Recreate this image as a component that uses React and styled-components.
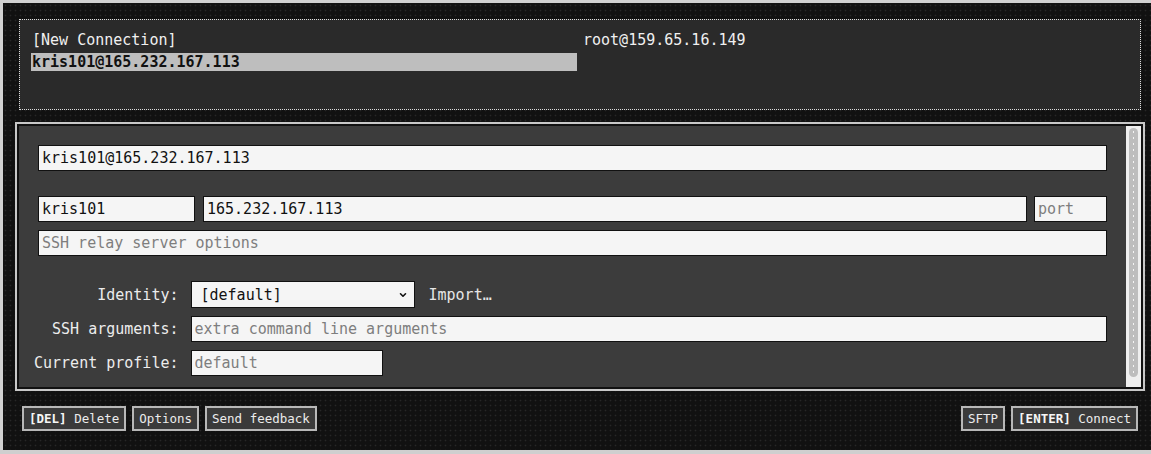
import React from 'react'
import styled, { createGlobalStyle } from 'styled-components'
import { ChevronDown } from 'lucide-react'

const mono = `"DejaVu Sans Mono", "Liberation Mono", monospace`

const GlobalStyle = createGlobalStyle`
    html, body {
        margin: 0;
        padding: 0;
        background: #111;
    }
    * {
        box-sizing: border-box;
    }
`

const Frame = styled.div`
    width: 1151px;
    height: 454px;
    border: solid #cfcfcf;
    border-width: 3px 0 4px 3px;
    background-color: #111;
    background-image: radial-gradient(circle, #272727 0.7px, transparent 1.1px);
    background-size: 5px 5px;
    padding: 16px 10px 19px 16px;
    display: flex;
    flex-direction: column;
    font-family: ${mono};
`

const HostList = styled.div`
    height: 91px;
    flex: 0 0 auto;
    border: 1px dotted #dcdcdc;
    background: #2a2a2a;
    padding: 11px 12px 0 11px;
    display: grid;
    grid-template-columns: 1fr 1fr;
    grid-auto-rows: 18px;
    column-gap: 5px;
    row-gap: 4px;
    align-content: start;
`

const HostItem = styled.div`
    height: 18px;
    line-height: 18px;
    font-size: 15px;
    padding-left: 1px;
    white-space: nowrap;
    color: ${p => (p.$selected ? '#111' : '#f0f0f0')};
    background: ${p => (p.$selected ? '#bebebe' : 'transparent')};
    font-weight: ${p => (p.$selected ? 'bold' : 'normal')};
`

const FormPanel = styled.div`
    margin: 14px -2px 0;
    height: 265px;
    flex: 0 0 auto;
    border: 2px solid #111;
    outline: 2px solid #c8c8c8;
    background: #3c3c3c;
    display: flex;
`

const FormBody = styled.div`
    flex: 1;
    padding: 19px 19px 0 19px;
    display: flex;
    flex-direction: column;
`

const Scrollbar = styled.div`
    width: 15px;
    background: #efefef;
    padding: 2px 3px 10px;
    display: flex;
    flex-direction: column;
`

const Thumb = styled.div`
    flex: 1;
    border-radius: 4.5px;
    background-color: #bdbdbd;
    background-image: radial-gradient(circle, #f4f4f4 0.6px, transparent 1px);
    background-size: 5px 6px;
    background-position: 2px 1px;
`

const Input = styled.input`
    display: block;
    height: ${p => p.$height || 26}px;
    width: ${p => (p.$width ? `${p.$width}px` : '100%')};
    flex: ${p => (p.$grow ? '1 1 0' : '0 0 auto')};
    min-width: 0;
    border: 1px solid #111;
    background: #f5f5f5;
    color: #111;
    font-family: ${mono};
    font-size: 15px;
    padding: 0 3px;
    margin: 0;
    outline: none;
    border-radius: 0;
    &::placeholder {
        color: #7e7e7e;
    }
`

const Block = styled.div`
    display: flex;
    flex-direction: column;
    gap: 8px;
    margin-bottom: 25px;
`

const HostRow = styled.div`
    display: flex;
    gap: 8px;
    & > :last-child {
        margin-left: -1px;
    }
`

const OptionGrid = styled.div`
    margin-left: -4px;
    display: grid;
    grid-template-columns: max-content 1fr;
    column-gap: 12px;
    row-gap: 8px;
    align-items: center;
`

const Label = styled.label`
    justify-self: end;
    color: #ececec;
    font-size: 15px;
    white-space: nowrap;
`

const Field = styled.div`
    display: flex;
    align-items: center;
    gap: 14px;
`

const SelectWrap = styled.div`
    position: relative;
    width: 224px;
    height: 27px;
`

const Select = styled.select`
    appearance: none;
    display: block;
    width: 100%;
    height: 100%;
    border: 1px solid #111;
    border-radius: 0;
    background: #f5f5f5;
    color: #111;
    font-family: ${mono};
    font-size: 15px;
    padding: 0 24px 0 9px;
    margin: 0;
    outline: none;
`

const Chevron = styled.span`
    position: absolute;
    right: 7px;
    top: 9px;
    display: flex;
    pointer-events: none;
    color: #111;
`

const LinkText = styled.span`
    color: #e6e6e6;
    font-size: 15px;
`

const ButtonBar = styled.div`
    margin-top: 17px;
    padding: 0 3px;
    height: 25px;
    flex: 0 0 auto;
    display: flex;
    justify-content: space-between;
`

const ButtonGroup = styled.div`
    display: flex;
    gap: ${p => p.$gap}px;
`

const Button = styled.button`
    height: 25px;
    border: 2px solid #b8b8b8;
    background: #3a3a3a;
    color: #ececec;
    font-family: ${mono};
    font-size: 12.5px;
    padding: 0 5px;
    margin: 0;
    white-space: nowrap;
    cursor: pointer;
    b {
        color: #f6f6f6;
    }
`

const App = () => {
    return (
        <>
            <GlobalStyle />
            <Frame>
                <HostList>
                    <HostItem>[New Connection]</HostItem>
                    <HostItem>root@159.65.16.149</HostItem>
                    <HostItem $selected>kris101@165.232.167.113</HostItem>
                </HostList>
                <FormPanel>
                    <FormBody>
                        <Block>
                            <Input defaultValue="kris101@165.232.167.113" />
                        </Block>
                        <Block>
                            <HostRow>
                                <Input $width={157} defaultValue="kris101" />
                                <Input $grow defaultValue="165.232.167.113" />
                                <Input $width={73} placeholder="port" />
                            </HostRow>
                            <Input placeholder="SSH relay server options" />
                        </Block>
                        <OptionGrid>
                            <Label>Identity:</Label>
                            <Field>
                                <SelectWrap>
                                    <Select defaultValue="default">
                                        <option value="default">[default]</option>
                                    </Select>
                                    <Chevron>
                                        <ChevronDown size={10} strokeWidth={3.8} />
                                    </Chevron>
                                </SelectWrap>
                                <LinkText>Import…</LinkText>
                            </Field>
                            <Label>SSH arguments:</Label>
                            <Field>
                                <Input $grow placeholder="extra command line arguments" />
                            </Field>
                            <Label>Current profile:</Label>
                            <Field>
                                <Input $width={192} placeholder="default" />
                            </Field>
                        </OptionGrid>
                    </FormBody>
                    <Scrollbar>
                        <Thumb />
                    </Scrollbar>
                </FormPanel>
                <ButtonBar>
                    <ButtonGroup $gap={6}>
                        <Button><b>[DEL]</b> Delete</Button>
                        <Button>Options</Button>
                        <Button>Send feedback</Button>
                    </ButtonGroup>
                    <ButtonGroup $gap={6}>
                        <Button>SFTP</Button>
                        <Button><b>[ENTER]</b> Connect</Button>
                    </ButtonGroup>
                </ButtonBar>
            </Frame>
        </>
    )
}

export default App
